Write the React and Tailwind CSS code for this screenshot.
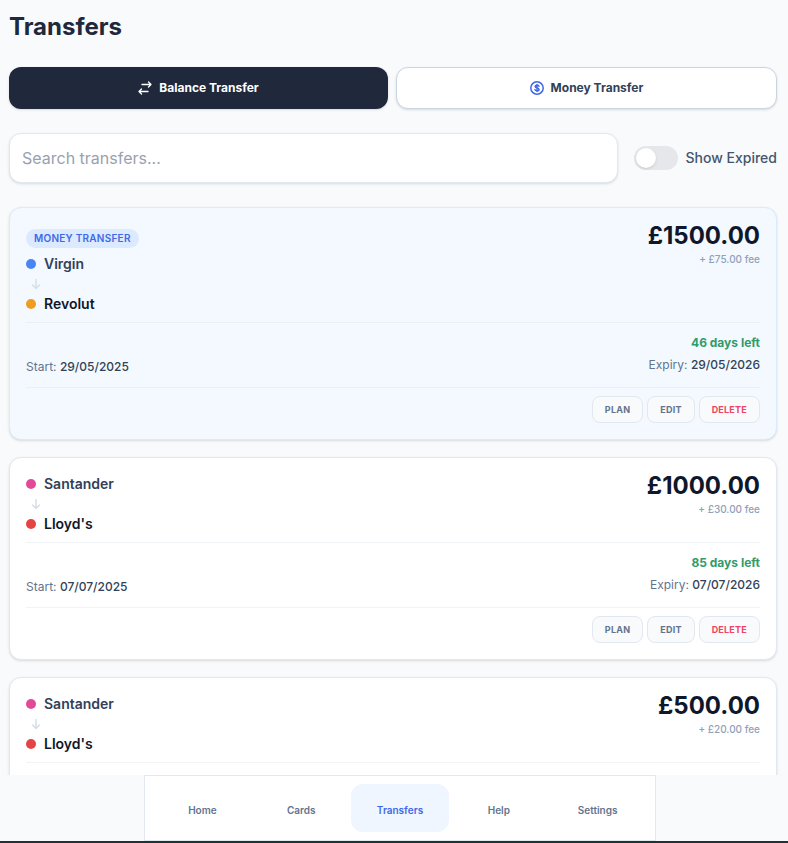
import { useState } from 'react';

const transfers = [
  {
    id: 1,
    type: 'money',
    from: { name: 'Virgin', dot: 'bg-[#4a85f5]' },
    to: { name: 'Revolut', dot: 'bg-[#f09c1f]' },
    amount: '1500.00',
    fee: '75.00',
    daysLeft: 46,
    start: '29/05/2025',
    expiry: '29/05/2026',
  },
  {
    id: 2,
    type: 'balance',
    from: { name: 'Santander', dot: 'bg-[#e24a97]' },
    to: { name: "Lloyd's", dot: 'bg-[#e54444]' },
    amount: '1000.00',
    fee: '30.00',
    daysLeft: 85,
    start: '07/07/2025',
    expiry: '07/07/2026',
  },
  {
    id: 3,
    type: 'balance',
    from: { name: 'Santander', dot: 'bg-[#e24a97]' },
    to: { name: "Lloyd's", dot: 'bg-[#e54444]' },
    amount: '500.00',
    fee: '20.00',
    daysLeft: 112,
    start: '03/08/2025',
    expiry: '03/08/2026',
  },
];

const navItems = ['Home', 'Cards', 'Transfers', 'Help', 'Settings'];

function SwapIcon() {
  return (
    <svg className="w-[14px] h-[14px]" viewBox="0 0 14 14" fill="none" stroke="currentColor" strokeWidth="1.3" strokeLinecap="round" strokeLinejoin="round" aria-hidden="true">
      <path d="M4 3.500h9M10.500 1 13 3.500 10.500 6M10 10.500H1M3.500 8 1 10.500 3.500 13" />
    </svg>
  );
}

function CoinIcon() {
  return (
    <svg className="w-[14px] h-[14px] text-[#3f68e8]" viewBox="0 0 14 14" fill="none" stroke="currentColor" strokeWidth="1.5" strokeLinecap="round" strokeLinejoin="round" aria-hidden="true">
      <circle cx="7" cy="7" r="6.200" />
      <path d="M9 5.300C8.700 4.600 8 4.300 7 4.300c-1.100 0-1.900.5-1.900 1.300 0 1.900 3.900.8 3.900 2.800 0 .8-.9 1.300-2 1.300s-1.900-.4-2.100-1.100M7 3.500v7" />
    </svg>
  );
}

function ArrowDownIcon() {
  return (
    <svg className="w-3 h-3 text-[#d5dfe8]" viewBox="0 0 12 12" fill="none" stroke="currentColor" strokeWidth="1.5" strokeLinecap="round" strokeLinejoin="round" aria-hidden="true">
      <path d="M6 1.500v9M2.500 7 6 10.500 9.500 7" />
    </svg>
  );
}

function TransferCard({ transfer }) {
  const isMoney = transfer.type === 'money';
  const divider = isMoney ? 'border-[#e8eff5]' : 'border-[#f1f4f7]';

  return (
    <article
      className={`rounded-xl border p-4 shadow-sm ${
        isMoney ? 'bg-[#f3f9fe] border-blue-100' : 'bg-white border-slate-200'
      }`}
    >
      <div className={`flex items-start justify-between pb-2 border-b ${divider}`}>
        <div>
          {isMoney && (
            <div className="pt-[5px] pb-[6px] flex">
              <span className="rounded-full bg-blue-100 px-2 text-[10px] leading-[19px] font-semibold tracking-wide uppercase text-[#3f68e8]">
                Money Transfer
              </span>
            </div>
          )}
          <div className="flex items-center gap-2 h-5">
            <span className={`w-[10px] h-[10px] rounded-full ${transfer.from.dot}`} />
            <span className="text-sm font-semibold text-slate-700">{transfer.from.name}</span>
          </div>
          <div className="flex items-center h-5 pl-1">
            <ArrowDownIcon />
          </div>
          <div className="flex items-center gap-2 h-5">
            <span className={`w-[10px] h-[10px] rounded-full ${transfer.to.dot}`} />
            <span className="text-sm font-semibold text-slate-900">{transfer.to.name}</span>
          </div>
        </div>
        <div className="text-right">
          <div className="text-2xl leading-6 font-bold text-slate-900">£{transfer.amount}</div>
          <div className="mt-[3px] text-[10px] leading-4 font-medium text-slate-400">+ £{transfer.fee} fee</div>
        </div>
      </div>

      <div className={`flex items-end justify-between pt-[9px] pb-[11px] border-b text-xs text-slate-500 ${divider}`}>
        <p className="leading-[18px]">
          Start: <span className="font-medium text-slate-700">{transfer.start}</span>
        </p>
        <div className="text-right">
          <p className="leading-[22px] font-bold text-[#319b69]">{transfer.daysLeft} days left</p>
          <p className="leading-[22px]">
            Expiry: <span className="font-medium text-slate-700">{transfer.expiry}</span>
          </p>
        </div>
      </div>

      <div className="flex justify-end gap-1 pt-2">
        {['Plan', 'Edit', 'Delete'].map((action) => (
          <button
            key={action}
            type="button"
            className={`h-[27px] px-3 rounded-lg border border-slate-200 bg-slate-50 text-[9px] font-bold uppercase tracking-wide ${
              action === 'Delete' ? 'text-[#ee4564]' : 'text-slate-500'
            }`}
          >
            {action}
          </button>
        ))}
      </div>
    </article>
  );
}

export default function App() {
  const [search, setSearch] = useState('');
  const [showExpired, setShowExpired] = useState(false);
  const [active, setActive] = useState('Transfers');

  const visible = transfers.filter((t) =>
    `${t.from.name} ${t.to.name}`.toLowerCase().includes(search.toLowerCase())
  );

  return (
    <div className="h-screen flex flex-col bg-slate-50 font-['Inter',sans-serif] border-b-2 border-[#1f3336]">
      <main className="flex-1 min-h-0 overflow-y-auto [scrollbar-width:none] pl-[9px] pr-[11px] pt-[11px]">
        <h1 className="text-2xl font-bold text-[#20293b]">Transfers</h1>

        <div className="mt-6 flex gap-2">
          <button
            type="button"
            className="flex-1 flex items-center justify-center gap-[7px] rounded-xl bg-[#20293b] text-white text-xs font-bold shadow-sm"
          >
            <SwapIcon />
            Balance Transfer
          </button>
          <button
            type="button"
            className="flex-1 flex items-center justify-center gap-[7px] py-3 rounded-xl bg-white border border-slate-300 text-slate-700 text-xs font-bold shadow-sm"
          >
            <CoinIcon />
            Money Transfer
          </button>
        </div>

        <div className="mt-6 flex items-center gap-4">
          <input
            type="text"
            aria-label="Search transfers"
            placeholder="Search transfers..."
            value={search}
            onChange={(e) => setSearch(e.target.value)}
            className="flex-1 min-w-0 p-3 rounded-xl border border-slate-200 bg-white text-base text-slate-800 placeholder:text-gray-400 shadow-sm outline-none"
          />
          <label className="flex items-center gap-2 text-sm font-medium text-slate-600">
            <input
              type="checkbox"
              checked={showExpired}
              onChange={(e) => setShowExpired(e.target.checked)}
              className="appearance-none w-11 h-6 p-[2px] rounded-full bg-gray-200 checked:bg-blue-600 before:block before:w-5 before:h-5 before:rounded-full before:bg-white before:shadow-sm checked:before:translate-x-5 before:transition-transform"
            />
            Show Expired
          </label>
        </div>

        <div className="mt-6 flex flex-col gap-[17px]">
          {visible.map((t) => (
            <TransferCard key={t.id} transfer={t} />
          ))}
        </div>
      </main>

      <div className="pl-3 flex justify-center">
        <nav className="w-full max-w-lg flex px-2 py-2 bg-white border border-slate-200">
          {navItems.map((item) => (
            <button
              key={item}
              type="button"
              onClick={() => setActive(item)}
              className={`flex-1 h-12 pt-1 rounded-xl text-[10px] font-semibold ${
                active === item ? 'bg-blue-50 text-[#3f68e8]' : 'text-slate-500'
              }`}
            >
              {item}
            </button>
          ))}
        </nav>
      </div>
    </div>
  );
}
